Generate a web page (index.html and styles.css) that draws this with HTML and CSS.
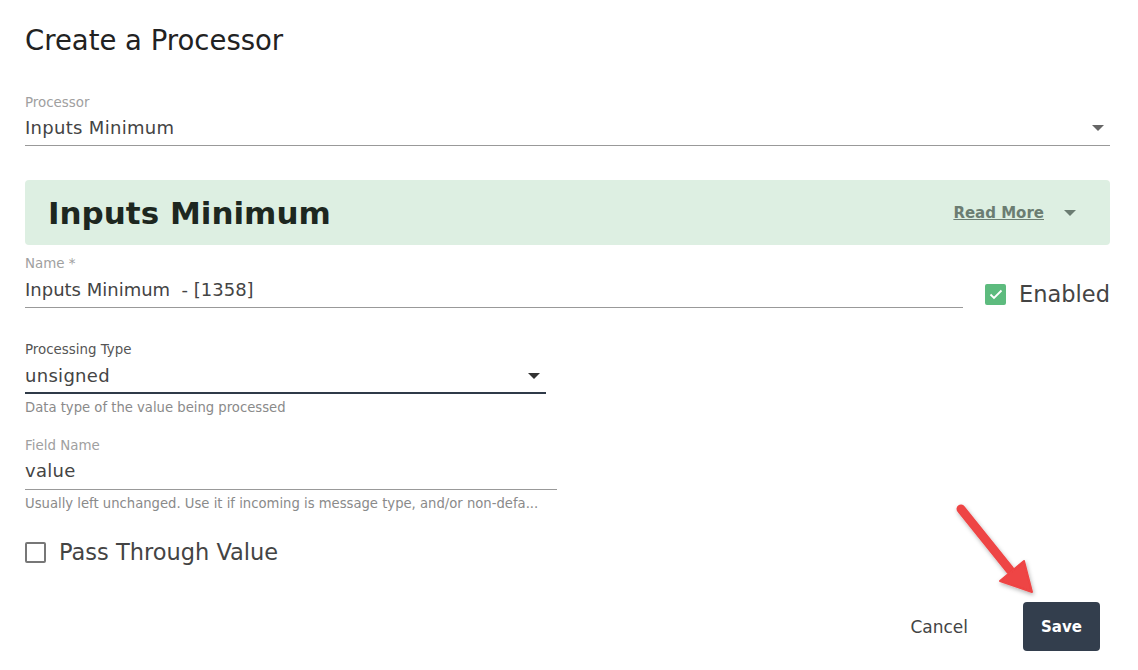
FILE: index.html
```html
<!DOCTYPE html>
<html>
<head>
    <title>Create a Processor</title>
    <link rel="stylesheet" href="styles.css">
</head>

<body>
    <div class="dialog">

        <h1 class="title">Create a Processor</h1>

        <div class="field">
            <label class="field-label">Processor</label>
            <div class="field-input">
                <span>Inputs Minimum</span>
                <svg class="caret" width="12" height="6" viewBox="0 0 12 6"><path d="M0 0h12L6 6z"/></svg>
            </div>
        </div>

        <div class="info-box">
            <h2>Inputs Minimum</h2>
            <div class="read-more">
                <a href="#">Read More</a>
                <svg class="caret" width="12" height="6" viewBox="0 0 12 6"><path d="M0 0h12L6 6z"/></svg>
            </div>
        </div>

        <div class="name-row">
            <div class="field grow">
                <label class="field-label">Name *</label>
                <div class="field-input">
                    <span>Inputs Minimum &nbsp;- [1358]</span>
                </div>
            </div>
            <div class="check-row">
                <span class="box checked">
                    <svg width="14" height="11" viewBox="0 0 14 11"><path d="M1.5 5.5l3.5 3.5 7.5-7.5" fill="none" stroke="#fff" stroke-width="1.8"/></svg>
                </span>
                <span>Enabled</span>
            </div>
        </div>

        <div class="field type-field">
            <label class="field-label dark">Processing Type</label>
            <div class="field-input focused">
                <span>unsigned</span>
                <svg class="caret dark" width="12" height="6" viewBox="0 0 12 6"><path d="M0 0h12L6 6z"/></svg>
            </div>
            <p class="hint">Data type of the value being processed</p>
        </div>

        <div class="field fieldname-field">
            <label class="field-label">Field Name</label>
            <div class="field-input">
                <span>value</span>
            </div>
            <p class="hint">Usually left unchanged. Use it if incoming is message type, and/or non-defa...</p>
        </div>

        <div class="check-row pass">
            <span class="box"></span>
            <span>Pass Through Value</span>
        </div>

        <div class="actions">
            <button class="btn-text">Cancel</button>
            <button class="btn-save">Save</button>
        </div>

        <!-- red pointer drawn over the save button -->
        <svg class="pointer" width="1138" height="670" viewBox="0 0 1138 670">
            <defs>
                <filter id="shadow" x="-20%" y="-20%" width="140%" height="140%">
                    <feDropShadow dx="1" dy="2" stdDeviation="2" flood-color="#000" flood-opacity="0.3"/>
                </filter>
            </defs>
            <g filter="url(#shadow)" fill="#ee4444" stroke="#ee4444">
                <line x1="961" y1="509" x2="1010" y2="570" stroke-width="9" stroke-linecap="round"/>
                <path d="M1000 581L1024 561L1032 592Z" stroke-width="2" stroke-linejoin="round"/>
            </g>
        </svg>

    </div>
</body>
</html>
```

FILE: styles.css
```css
body {
    margin: 0;
    font-family: "DejaVu Sans", sans-serif;
    background: #fff;
    color: #444;
}

.dialog {
    position: relative;
    width: 1138px;
    height: 670px;
    box-sizing: border-box;
    padding: 23px 28px 0 25px;
}

.title {
    margin: 0 0 38px;
    font-size: 27.5px;
    line-height: 34px;
    font-weight: normal;
    color: #222;
}

.field-label {
    display: block;
    font-size: 13.4px;
    line-height: 16px;
    color: #a0a0a0;
}

.field-label.dark {
    color: #555;
}

.field-input {
    display: flex;
    align-items: center;
    justify-content: space-between;
    padding: 6px 4px 6px 0;
    font-size: 18px;
    line-height: 22px;
    letter-spacing: 0.3px;
    color: #444;
    border-bottom: 1px solid #999;
}

.caret {
    fill: #666;
    margin-right: 2px;
}

.caret.dark {
    fill: #333;
}

.info-box {
    display: flex;
    align-items: center;
    justify-content: space-between;
    height: 65px;
    margin-top: 34px;
    padding: 0 32px 0 23px;
    background: #ddefe2;
    border-radius: 4px;
}

.info-box h2 {
    margin: 0;
    font-size: 31px;
    font-weight: 600;
    color: #1d2720;
}

.read-more {
    display: flex;
    align-items: center;
    gap: 20px;
}

.read-more a {
    font-size: 15px;
    font-weight: 600;
    color: #6b7d72;
}

.read-more .caret {
    fill: #6b7d72;
}

.name-row {
    display: flex;
    align-items: flex-end;
    gap: 22px;
    margin-top: 11px;
}

.grow {
    flex: 1;
}

.name-row .field-input {
    padding-top: 7px;
    letter-spacing: 0;
}

.check-row {
    display: flex;
    align-items: center;
    gap: 13px;
    font-size: 22.5px;
    color: #444;
}

.name-row .check-row {
    margin-bottom: 1px;
}

.box {
    display: flex;
    align-items: center;
    justify-content: center;
    width: 17px;
    height: 17px;
    border: 2px solid #777;
    border-radius: 2px;
}

.box.checked {
    background: #5dbb7e;
    border-color: #5dbb7e;
}

.type-field {
    width: 521px;
    margin-top: 34px;
}

.type-field .field-input {
    padding: 7px 4px 5px 0;
}

.field-input.focused {
    border-bottom: 2px solid #2f3a48;
}

.hint {
    margin: 6px 0 0;
    font-size: 13.2px;
    line-height: 16px;
    color: #8a8a8a;
    white-space: nowrap;
}

.fieldname-field {
    width: 532px;
    margin-top: 22px;
}

.fieldname-field .field-input {
    padding-bottom: 7px;
}

.pass {
    margin-top: 25px;
    height: 30px;
}

.actions {
    display: flex;
    justify-content: flex-end;
    align-items: center;
    gap: 39px;
    margin-top: 35px;
    padding-right: 10px;
}

.actions button {
    font-family: inherit;
    font-size: 15px;
    border: none;
    cursor: pointer;
}

.actions .btn-text {
    background: none;
    color: #444;
    padding: 0 16px;
    font-size: 17px;
}

.btn-save {
    width: 77px;
    height: 49px;
    background: #333e4d;
    color: #fff;
    font-weight: 600;
    border-radius: 4px;
}

.pointer {
    position: absolute;
    left: 0;
    top: 0;
    pointer-events: none;
}
```
